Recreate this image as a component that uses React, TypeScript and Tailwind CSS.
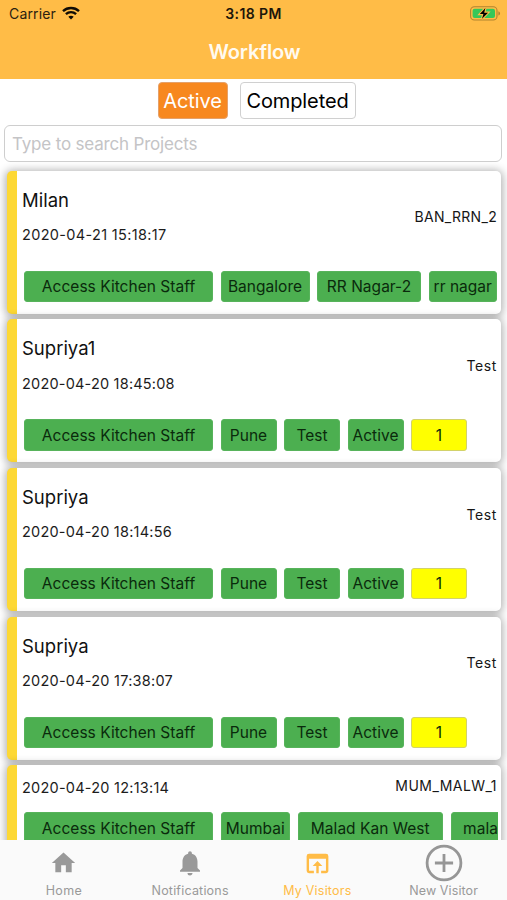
import React from 'react';
import { clsx } from 'clsx';
import { MdHome, MdNotifications, MdOpenInBrowser } from 'react-icons/md';

interface Tag {
  label: string;
  width: string;
  highlight?: boolean;
}

interface Visitor {
  name?: string;
  date: string;
  dateTracking: string;
  code: string;
  codeTracking: string;
  tags: Tag[];
}

const STAFF: Tag = { label: 'Access Kitchen Staff', width: 'w-[189px]' };

const PUNE_TAGS: Tag[] = [
  STAFF,
  { label: 'Pune', width: 'w-[56px]' },
  { label: 'Test', width: 'w-[56px]' },
  { label: 'Active', width: 'w-[56px]' },
  { label: '1', width: 'w-[56px]', highlight: true },
];

const VISITORS: Visitor[] = [
  {
    name: 'Milan',
    date: '2020-04-21 15:18:17',
    dateTracking: 'tracking-[0.33px]',
    code: 'BAN_RRN_2',
    codeTracking: 'tracking-[0.3px]',
    tags: [
      STAFF,
      { label: 'Bangalore', width: 'w-[89px]' },
      { label: 'RR Nagar-2', width: 'w-[104px]' },
      { label: 'rr nagar', width: 'w-[68.5px]' },
    ],
  },
  {
    name: 'Supriya1',
    date: '2020-04-20 18:45:08',
    dateTracking: 'tracking-[0.2px]',
    code: 'Test',
    codeTracking: 'tracking-[0.6px]',
    tags: PUNE_TAGS,
  },
  {
    name: 'Supriya',
    date: '2020-04-20 18:14:56',
    dateTracking: 'tracking-[0.22px]',
    code: 'Test',
    codeTracking: 'tracking-[0.6px]',
    tags: PUNE_TAGS,
  },
  {
    name: 'Supriya',
    date: '2020-04-20 17:38:07',
    dateTracking: 'tracking-[0.24px]',
    code: 'Test',
    codeTracking: 'tracking-[0.6px]',
    tags: PUNE_TAGS,
  },
  {
    date: '2020-04-20 12:13:14',
    dateTracking: 'tracking-[0.24px]',
    code: 'MUM_MALW_1',
    codeTracking: 'tracking-[0.45px]',
    tags: [
      STAFF,
      { label: 'Mumbai', width: 'w-[69.5px]' },
      { label: 'Malad Kan West', width: 'w-[145.5px]' },
      { label: 'mala', width: 'w-[60px]' },
    ],
  },
];

const StatusBar: React.FC = () => (
  <div className="grid h-[27px] grid-cols-3 items-center pl-[9px] pr-[6px] text-[14px] text-[#2b2110]">
    <div className="flex items-center gap-[6px]">
      <span className="tracking-[0.15px]">Carrier</span>
      <svg className="-mt-[2px]" width="18" height="14" viewBox="0 0 18 14" fill="none" stroke="#100c05" strokeWidth="2.4">
        <path d="M1 5.1C5.5 .9 12.5 .9 17 5.1" />
        <path d="M3.9 8.1C6.8 5.4 11.2 5.4 14.1 8.1" />
        <path d="M9 13.5 6.3 10.7C7.8 9.3 10.2 9.3 11.7 10.7Z" fill="#100c05" stroke="none" />
      </svg>
    </div>
    <span className="-ml-[3px] text-center font-semibold tracking-[0.4px] text-[#1d160a]">3:18 PM</span>
    <svg className="-mt-px justify-self-end" width="31" height="15" viewBox="0 0 31 15">
      <rect x=".6" y=".8" width="26.4" height="13.2" rx="3.8" fill="none" stroke="#b08331" strokeWidth="1.1" />
      <rect x="2.6" y="2.7" width="22.4" height="9.4" rx="2" fill="#35c759" />
      <path d="M28.4 5.2c2.2.9 2.2 3.5 0 4.4Z" fill="#b08331" />
      <path d="M15.4 2 9.8 8.1h3.6L12 12.8 18 6.7h-3.8Z" fill="#000" stroke="#ffbc47" strokeWidth="2.2" paintOrder="stroke" />
    </svg>
  </div>
);

const VisitorCard: React.FC<{ visitor: Visitor }> = ({ visitor }) => (
  <div
    className={clsx(
      'flex h-[143px] shrink-0 flex-col rounded-[5px] border-l-[10px] border-[#fdd835] bg-white pl-[5px] pr-[3px] shadow-[0_1px_8px_2px_rgba(0,0,0,0.3)]',
      visitor.name ? 'pt-[17px]' : 'pt-[9.5px]'
    )}
  >
    <div className={clsx('flex justify-between pr-px', visitor.name ? 'h-[83px]' : 'h-[37.5px]')}>
      <div className="flex flex-col">
        {visitor.name && (
          <span className="mb-[9.5px] text-[18.5px] leading-[25px] text-[#111]">{visitor.name}</span>
        )}
        <span className={clsx('text-[14.5px] leading-[26px] text-[#1c1c1c]', visitor.dateTracking)}>
          {visitor.date}
        </span>
      </div>
      <span
        className={clsx(
          'text-[14px] leading-[22px] text-[#161616]',
          visitor.codeTracking,
          visitor.name && 'mt-[18.7px]'
        )}
      >
        {visitor.code}
      </span>
    </div>

    {/* Tags scroll off the right edge */}
    <div className="flex gap-[7.5px] overflow-hidden pl-[2px]">
      {visitor.tags.map((tag) => (
        <div
          key={tag.label}
          className={clsx(
            'flex h-[31.5px] shrink-0 items-center justify-center whitespace-nowrap rounded-[3px] border pt-[0.8px] text-[15.5px] tracking-[0.03px] text-[#0a2a0c]',
            tag.highlight ? 'border-[#d2d26a] bg-[#ffff00]' : 'border-[#57b35b] bg-[#4caf50]',
            tag.width
          )}
        >
          {tag.label}
        </div>
      ))}
    </div>
  </div>
);

const TabBar: React.FC = () => (
  <nav className="grid h-[60px] shrink-0 grid-cols-4 bg-[#fafafa] text-[12.5px] leading-[16px] text-[#999]">
    <div className="flex flex-col items-center pl-px">
      <MdHome className="mt-[9px] h-[28px] w-[29px]" />
      <span className="mt-[6px] tracking-[0.3px]">Home</span>
    </div>
    <div className="flex flex-col items-center">
      <MdNotifications className="mt-[8px] size-[30px]" />
      <span className="mt-[5px] tracking-[0.2px]">Notifications</span>
    </div>
    <div className="flex flex-col items-center pl-px text-[#ffbc47]">
      <MdOpenInBrowser className="mt-[9px] size-[29px]" />
      <span className="mt-[5px] tracking-[0.2px]">My Visitors</span>
    </div>
    <div className="flex flex-col items-center">
      <svg className="mt-[4px]" width="38" height="38" viewBox="0 0 38 38" fill="none" stroke="#969696">
        <circle cx="19" cy="19" r="16.9" strokeWidth="2.8" />
        <path d="M19 9.9v18.2M9.9 19h18.2" strokeWidth="2.8" />
      </svg>
      <span className="mt-px tracking-[0.1px]">New Visitor</span>
    </div>
  </nav>
);

export default function App() {
  return (
    <div className="flex h-[900px] w-[507px] flex-col overflow-hidden bg-white font-['Inter',sans-serif]">
      <header className="h-[79px] shrink-0 bg-[#ffbc47]">
        <StatusBar />
        <h1 className="pt-[10px] pl-[2px] text-center text-[20px] leading-[30px] font-semibold tracking-[-0.1px] text-[#fffaf0]">
          Workflow
        </h1>
      </header>

      <div className="flex shrink-0 justify-center gap-[12px] pt-[3px] pl-[6px] text-[20px] tracking-[-0.1px]">
        <button className="h-[37px] w-[70px] rounded-[4px] border border-[#e5a16a] bg-[#f7881f] pt-px text-white">
          Active
        </button>
        <button className="h-[37px] w-[116px] rounded-[4px] border border-[#d0d0d0] bg-white pt-px text-black">
          Completed
        </button>
      </div>

      <div className="shrink-0 pt-[6px] pr-[5px] pl-[4px]">
        <input
          className="block h-[37px] w-full rounded-[6px] border border-[#cecece] px-[7px] text-[17px] tracking-[-0.18px] outline-none placeholder:text-[#c4c4c6]"
          placeholder="Type to search Projects"
        />
      </div>

      <main className="flex min-h-0 flex-1 flex-col gap-[5.7px] overflow-hidden pt-[8.5px] pr-[6px] pl-[7px]">
        {VISITORS.map((visitor) => (
          <VisitorCard key={visitor.date} visitor={visitor} />
        ))}
      </main>

      <TabBar />
    </div>
  );
}
